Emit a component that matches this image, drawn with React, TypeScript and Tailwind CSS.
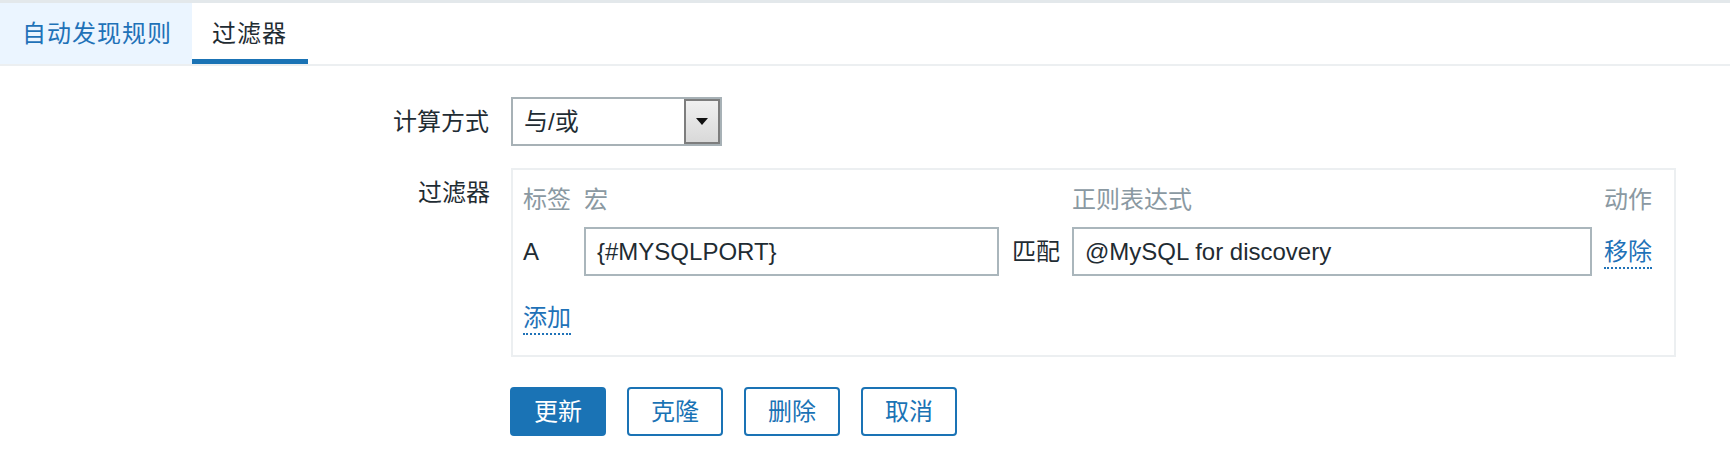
const font = "font-['Liberation_Sans','Noto_Sans_CJK_SC',sans-serif]"

function Tabs() {
  return (
    <div className="border-t-[3px] border-[#e3e8eb] border-b-2 border-b-[#eceff1] flex h-[66px]">
      <div className="bg-[#ebf5ff] w-[192px] pl-[22px] h-full flex items-center text-[#1f72b8] tracking-[1px]">自动发现规则</div>
      <div className="w-[116px] pl-[20px] h-full flex items-center text-[#1f2c33] border-b-[5px] border-[#1a73b5] pt-[5px] tracking-[1px]">过滤器</div>
    </div>
  )
}

function Link({ children }: { children: React.ReactNode }) {
  return (
    <span className="inline-block text-[#1f72b8] leading-[30px] border-b-2 border-dotted border-[#1f72b8]">{children}</span>
  )
}

function TextInput({ value, width }: { value: string; width: string }) {
  return (
    <div className={`${width} h-[49px] border-2 border-[#aab6bc] px-[11px] flex items-center text-[#1f2c33] bg-white`}>
      {value}
    </div>
  )
}

function Button({ label, primary }: { label: string; primary?: boolean }) {
  return (
    <button
      className={
        primary
          ? "w-[96px] h-[49px] rounded-[4px] bg-[#1a73b5] border-2 border-[#1a73b5] text-white"
          : "w-[96px] h-[49px] rounded-[4px] bg-white border-2 border-[#1a73b5] text-[#1a73b5]"
      }
    >
      {label}
    </button>
  )
}

export default function App() {
  return (
    <div className={`${font} text-[24px] w-[1730px] h-[459px] bg-white overflow-hidden`}>
      <Tabs />
      <div className="mt-[31px] flex flex-col">
        <div className="flex items-center">
          <div className="w-[490px] text-right text-[#1f2c33] pr-[1px]">计算方式</div>
          <div className="ml-[21px] w-[211px] h-[49px] border-2 border-[#a7b1b6] flex items-stretch">
            <div className="flex-1 pl-[11px] flex items-center text-[#1f2c33]">与/或</div>
            <div className="w-[36px] border-2 border-[#7d7d7d] bg-gradient-to-b from-[#f0f0f0] to-[#d9d9d9] flex items-center justify-center">
              <svg width="12" height="7" viewBox="0 0 12 7"><polygon points="0,0 12,0 6,7" fill="#111" /></svg>
            </div>
          </div>
        </div>

        <div className="flex mt-[22px]">
          <div className="w-[490px] text-right text-[#1f2c33] pt-[8px] leading-[34px]">过滤器</div>
          <div className="ml-[21px] w-[1165px] h-[189px] border-2 border-[#eceff1] pl-[10px] pt-[13px]">
            <div className="flex h-[34px] leading-[34px] text-[#8a99a2]">
              <div className="w-[61px]">标签</div>
              <div className="w-[488px]">宏</div>
              <div className="w-[532px]">正则表达式</div>
              <div>动作</div>
            </div>
            <div className="flex items-center mt-[10px]">
              <div className="w-[61px] text-[#1f2c33]">A</div>
              <TextInput value="{#MYSQLPORT}" width="w-[415px]" />
              <div className="ml-[13px] w-[60px] text-[#1f2c33]">匹配</div>
              <TextInput value="@MySQL for discovery" width="w-[520px]" />
              <div className="ml-[12px]">
                <Link>移除</Link>
              </div>
            </div>
            <div className="mt-[24px]">
              <Link>添加</Link>
            </div>
          </div>
        </div>

        <div className="flex gap-[21px] ml-[510px] mt-[30px]">
          <Button label="更新" primary />
          <Button label="克隆" />
          <Button label="删除" />
          <Button label="取消" />
        </div>
      </div>
    </div>
  )
}
